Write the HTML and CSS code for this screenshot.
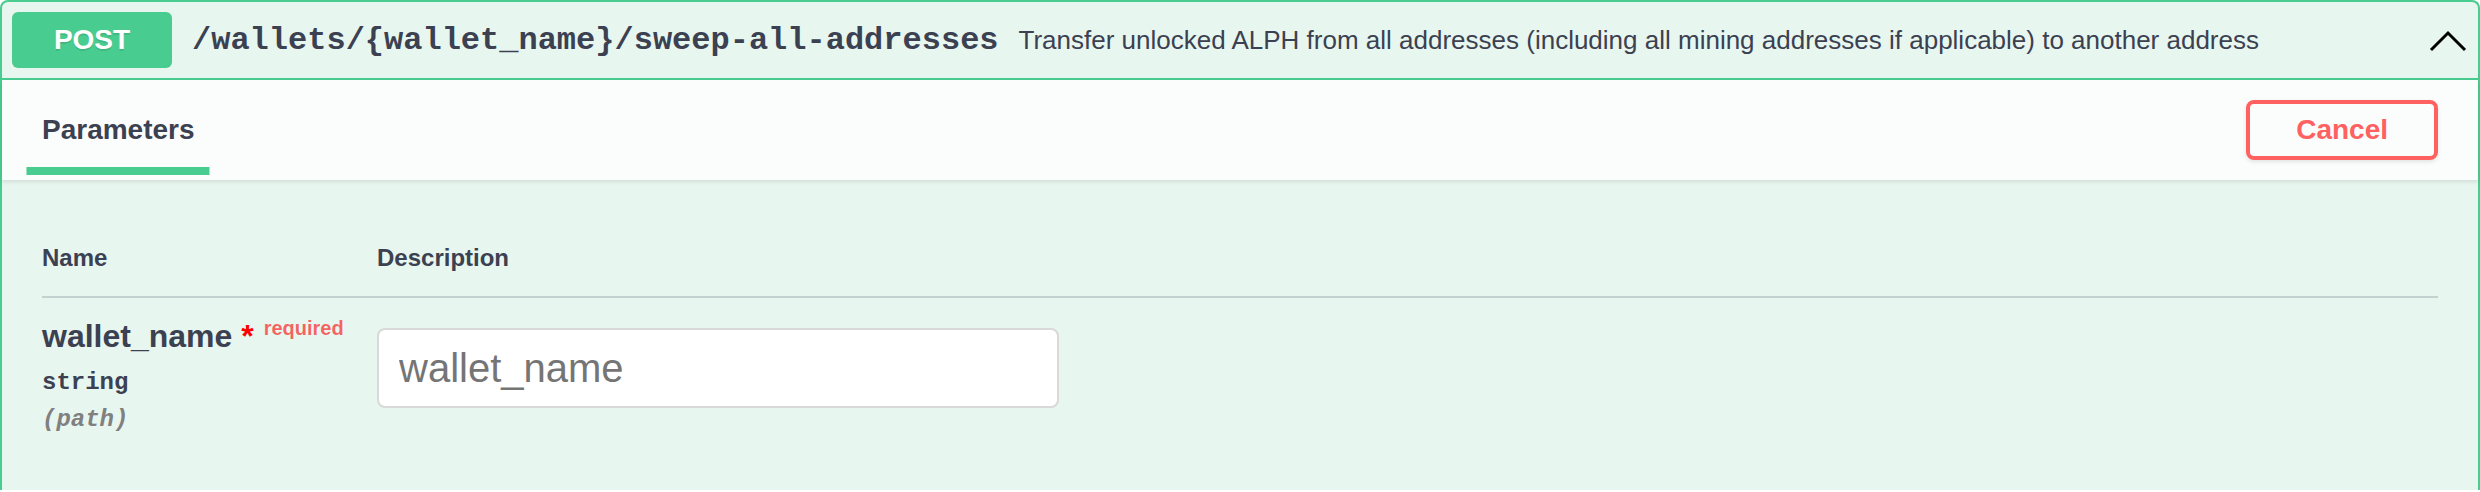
FILE: index.html
```html
<!DOCTYPE html>
<html>
<head>
<meta charset="utf-8">
<link rel="stylesheet" href="styles.css">
</head>
<body>
<div class="opblock">
  <div class="summary">
    <span class="method">POST</span>
    <span class="path">/wallets/{wallet_name}/sweep-all-addresses</span>
    <span class="desc">Transfer unlocked ALPH from all addresses (including all mining addresses if applicable) to another address</span>
    <svg class="arrow" width="40" height="40" viewBox="0 0 40 40"><polyline points="3,30 20,13 37,30" fill="none" stroke="#000" stroke-width="3"/></svg>
  </div>
  <div class="section-header">
    <div class="tab"><h4><span>Parameters</span></h4></div>
    <button class="btn-cancel">Cancel</button>
  </div>
  <div class="table-container">
    <div class="thead">
      <div class="col-name th">Name</div>
      <div class="col-desc th">Description</div>
    </div>
    <div class="row">
      <div class="col-name">
        <div class="pname">wallet_name<span class="star">&nbsp;*</span><span class="req">required</span></div>
        <div class="ptype">string</div>
        <div class="pin">(path)</div>
      </div>
      <div class="col-desc">
        <input class="inp" type="text" placeholder="wallet_name">
      </div>
    </div>
  </div>
</div>
</body>
</html>
```
FILE: styles.css
```css
html, body {
  margin: 0;
  padding: 0;
  background: #ffffff;
}
body {
  font-family: "Liberation Sans", Arial, sans-serif;
  color: #3b4151;
  overflow: hidden;
}
.opblock {
  border: 2px solid #49cc90;
  border-bottom: none;
  border-radius: 8px 8px 0 0;
  background: #e8f6f0;
  height: 488px;
  box-sizing: content-box;
}
.summary {
  display: flex;
  align-items: center;
  padding: 10px;
  border-bottom: 2px solid #49cc90;
  height: 56px;
}
.method {
  width: 160px;
  height: 56px;
  flex: none;
  background: #49cc90;
  border-radius: 6px;
  color: #fff;
  font-weight: 700;
  font-size: 28px;
  display: flex;
  align-items: center;
  justify-content: center;
  text-shadow: 0 2px 0 rgba(0,0,0,.1);
}
.path {
  font-family: "Liberation Mono", monospace;
  font-weight: 700;
  font-size: 32px;
  padding: 0 20px;
  color: #3b4151;
  white-space: nowrap;
}
.desc {
  flex: 1;
  font-size: 26px;
  color: #3b4151;
  white-space: nowrap;
}
.arrow {
  flex: none;
  display: block;
}
.section-header {
  display: flex;
  align-items: center;
  justify-content: space-between;
  padding: 16px 40px;
  min-height: 100px;
  box-sizing: border-box;
  background: rgba(255,255,255,.8);
  box-shadow: 0 2px 4px rgba(0,0,0,.1);
  position: relative;
}
.tab h4 {
  margin: 0;
  font-size: 28px;
  font-weight: 700;
  color: #3b4151;
}
.tab h4 span {
  position: relative;
}
.tab h4 span::after {
  content: "";
  position: absolute;
  left: 50%;
  transform: translateX(-50%);
  width: 120%;
  height: 8px;
  bottom: -30px;
  background: #49cc90;
}
.btn-cancel {
  font-family: "Liberation Sans", Arial, sans-serif;
  font-size: 28px;
  font-weight: 700;
  color: #ff6060;
  border: 4px solid #ff6060;
  border-radius: 8px;
  background: transparent;
  padding: 10px 46px;
  height: 60px;
  box-sizing: border-box;
  line-height: 32px;
  box-shadow: 0 2px 4px rgba(0,0,0,.1);
}
.table-container {
  padding: 40px;
}
.thead {
  display: flex;
  border-bottom: 2px solid rgba(59,65,81,.2);
}
.th {
  padding: 24px 0;
  font-size: 24px;
  font-weight: 700;
  line-height: 28px;
}
.col-name {
  width: 335px;
  flex: none;
}
.col-desc {
  flex: 1;
}
.row {
  display: flex;
  padding-top: 20px;
}
.pname {
  font-size: 32px;
  font-weight: 700;
  line-height: 37px;
  white-space: nowrap;
}
.star {
  color: red;
}
.req {
  font-size: 20px;
  position: relative;
  top: -12px;
  padding: 10px;
  color: rgba(255,0,0,.6);
}
.ptype {
  font-family: "Liberation Mono", monospace;
  font-weight: 700;
  font-size: 24px;
  line-height: 27px;
  padding: 10px 0;
}
.pin {
  font-family: "Liberation Mono", monospace;
  font-weight: 700;
  font-style: italic;
  font-size: 24px;
  line-height: 27px;
  color: gray;
}
.inp {
  display: block;
  margin: 10px 0 0 0;
  width: 682px;
  height: 80px;
  box-sizing: border-box;
  border: 2px solid #d9d9d9;
  border-radius: 8px;
  background: #fff;
  padding: 0 20px;
  font-family: "Liberation Sans", Arial, sans-serif;
  font-size: 40px;
  color: #3b4151;
  outline: none;
}
.inp::placeholder {
  color: #757575;
}
```
